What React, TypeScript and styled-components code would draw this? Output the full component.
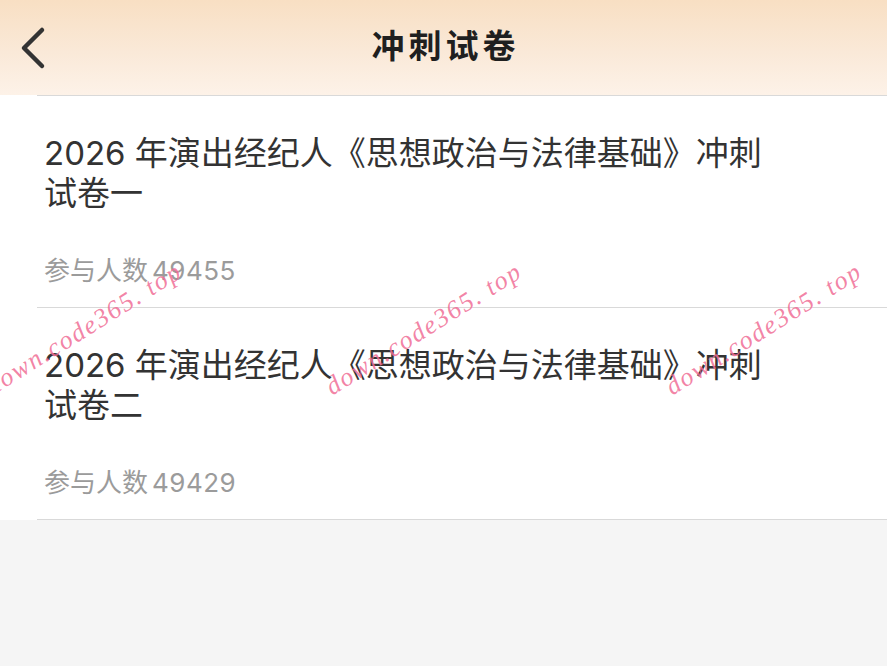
import React from "react";
import styled, { createGlobalStyle } from "styled-components";

const Global = createGlobalStyle`
  html, body {
    margin: 0;
    padding: 0;
    background: #f5f5f5;
  }
  body {
    font-family: "Inter", "Noto Sans CJK SC", sans-serif;
  }
  #root {
    min-height: 666px;
  }
`;

const Page = styled.div`
  position: relative;
  width: 887px;
  height: 666px;
  overflow: hidden;
  background: #f5f5f5;
`;

const Header = styled.header`
  height: 95px;
  display: grid;
  grid-template-columns: 80px 1fr 80px;
  align-items: center;
  background: linear-gradient(180deg, #f8dfc3 0%, #fae9d8 55%, #fdf2e8 100%);
`;

const BackButton = styled.button`
  border: 0;
  background: transparent;
  padding: 0 0 0 20px;
  height: 95px;
  display: flex;
  align-items: center;
  cursor: pointer;
`;

const HeaderTitle = styled.h1`
  margin: 0;
  padding: 0 0 0 4px;
  text-align: center;
  font-family: "Noto Sans CJK SC", sans-serif;
  font-size: 33px;
  font-weight: 700;
  letter-spacing: 4px;
  color: #1f1f1f;
  line-height: 1;
  transform: translateY(-3px);
`;

const List = styled.ul`
  list-style: none;
  margin: 0;
  padding: 0 0 0 37px;
  background: #ffffff;
`;

const Item = styled.li<{ $last?: boolean }>`
  border-top: 1px solid #d9d9d9;
  border-bottom: ${(p) => (p.$last ? "1px solid #d9d9d9" : "none")};
  padding: 37px 0 18px 7px;
  display: flex;
  flex-direction: column;
  gap: 40px;
`;

const Title = styled.div`
  max-width: 740px;
  font-size: 33px;
  line-height: 40px;
  font-weight: 400;
  color: #333333;
`;

const Meta = styled.div`
  font-size: 26px;
  line-height: 36px;
  color: #9b9b9b;
`;

const Count = styled.span`
  margin-left: 4px;
  letter-spacing: 0.5px;
`;

const Watermark = styled.span<{ $x: number }>`
  position: absolute;
  left: ${(p) => p.$x}px;
  top: 374px;
  transform-origin: 0 50%;
  transform: rotate(-32deg);
  font-family: "Liberation Serif", "DejaVu Serif", serif;
  font-style: italic;
  font-size: 26px;
  letter-spacing: 1.7px;
  line-height: 30px;
  color: rgba(240, 110, 150, 0.85);
  white-space: pre;
  pointer-events: none;
`;

const items = [
  { title: "2026 年演出经纪人《思想政治与法律基础》冲刺试卷一", count: 49455 },
  { title: "2026 年演出经纪人《思想政治与法律基础》冲刺试卷二", count: 49429 },
];

export default function App() {
  return (
    <Page>
      <Global />
      <Header>
        <BackButton aria-label="返回">
          <svg width="30" height="44" viewBox="0 0 30 44" fill="none">
            <path
              d="M22 4 L4 22 L22 40"
              stroke="#333333"
              strokeWidth="4.5"
              strokeLinecap="round"
              strokeLinejoin="round"
            />
          </svg>
        </BackButton>
        <HeaderTitle>冲刺试卷</HeaderTitle>
        <div />
      </Header>
      <List>
        {items.map((it, i) => (
          <Item key={i} $last={i === items.length - 1}>
            <Title>{it.title}</Title>
            <Meta>
              参与人数<Count>{it.count}</Count>
            </Meta>
          </Item>
        ))}
      </List>
      <Watermark $x={-12}>{"down.code365. top"}</Watermark>
      <Watermark $x={328}>{"down.code365. top"}</Watermark>
      <Watermark $x={668}>{"down.code365. top"}</Watermark>
    </Page>
  );
}
